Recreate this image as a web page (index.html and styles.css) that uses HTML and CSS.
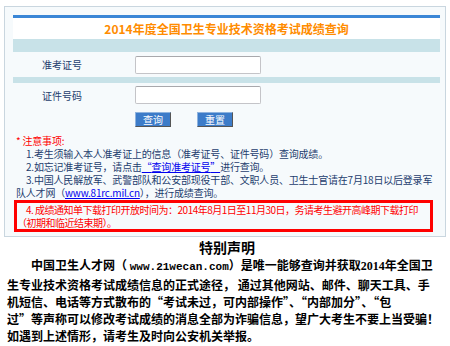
FILE: index.html
```html
<!DOCTYPE html>
<html lang="zh-CN">
<head>
  <meta charset="UTF-8">
  <title>2014年度全国卫生专业技术资格考试成绩查询</title>
  <link rel="stylesheet" href="styles.css">
</head>
<body>

<div class="panel">
  <form class="form" onsubmit="return false">
    <div class="bar"></div>
    <div class="title">2014年度全国卫生专业技术资格考试成绩查询</div>
    <div class="band"></div>
    <div class="row row-first">
      <label class="label">准考证号</label>
      <input class="field" type="text">
    </div>
    <div class="band band-thin"></div>
    <div class="row">
      <label class="label">证件号码</label>
      <input class="field" type="text">
    </div>
    <div class="actions">
      <button class="btn" type="submit">查询</button>
      <button class="btn" type="reset">重置</button>
    </div>
  </form>

  <!-- 注意事项 -->
  <div class="notes">
    <div class="notes-head">* 注意事项:</div>
    <div class="item">1.考生须输入本人准考证上的信息（准考证号、证件号码）查询成绩。</div>
    <div class="item">2.如忘记准考证号，请点击<a href="#"><span class="q">“</span>查询准考证号<span class="q">”</span></a>进行查询。</div>
    <div class="item">3.中国人民解放军、武警部队和公安部现役干部、文职人员、卫生士官请在7月18日以后登录军<br>队人才网（<a class="url" href="#">www.81rc.mil.cn</a>），进行成绩查询。</div>
  </div>

  <div class="alert">4. 成绩通知单下载打印开放时间为：2014年8月1日至11月30日，务请考生避开高峰期下载打印<br>（初期和临近结束期）。</div>
</div>

<h2 class="stmt-title">特别声明</h2>
<p class="stmt">中国卫生人才网（ <span class="latin">www.21wecan.com</span>）是唯一能够查询并获取<span class="num">2014</span>年全国卫<br>生专业技术资格考试成绩信息的正式途径， 通过其他网站、邮件、聊天工具、手<br>机短信、电话等方式散布的<span class="q">“</span>考试未过，可内部操作<span class="q">”</span>、<span class="q">“</span>内部加分<span class="q">”</span>、<span class="q">“</span>包<br>过<span class="q">”</span>等声称可以修改考试成绩的消息全部为诈骗信息，望广大考生不要上当受骗！<br>如遇到上述情形，请考生及时向公安机关举报。</p>

</body>
</html>
```

FILE: styles.css
```css
body {
  font-family: "Noto Sans CJK SC", sans-serif;
  margin: 0;
  padding: 6px 0 0 4px;
  background: #fff;
  color: #000;
}
.panel {
  width: 427px;
  padding: 8px 5px 4px 8px;
  border: 1px solid #c9d6df;
  background-color: #f6fafc;
}
.form {
  margin: 0;
}
.bar {
  height: 3px;
  background-color: #3a86d6;
}
.title {
  height: 21px;
  line-height: 21px;
  background: #fff;
  text-align: center;
  color: #ff8c00;
  font-size: 12px;
  font-weight: bold;
}
.band {
  height: 13px;
  background-color: #c8e2e8;
}
.band-thin {
  height: 6px;
}
.row {
  display: flex;
  align-items: center;
  height: 24px;
}
.row-first {
  height: 25px;
}
.label {
  width: 93px;
  padding-left: 29px;
  font-size: 10px;
  color: #1d3d6e;
}
.field {
  box-sizing: border-box;
  width: 126px;
  height: 18px;
  margin: 0;
  padding: 0 3px;
  border: 1px solid #c4c4c8;
  border-top-color: #a8a8ac;
  border-radius: 2px;
  background: #fff;
}
.actions {
  display: flex;
  gap: 26px;
  padding: 5px 0 0 122px;
}
.btn {
  box-sizing: border-box;
  width: 36px;
  height: 15px;
  padding: 0;
  border: 1px solid;
  border-color: #8fb3de #555 #555 #8fb3de;
  background-color: #3d7cc9;
  color: #fff;
  font-family: "Noto Sans CJK SC", sans-serif;
  font-size: 10px;
  line-height: 13px;
  cursor: pointer;
}

/* 全角引号 */
.q {
  font-feature-settings: "fwid";
}

/* 注意事项 */
.notes {
  margin: 7px 0 0 3px;
  font-size: 10px;
  line-height: 13px;
  letter-spacing: -0.2px;
  color: #1d3d6e;
  white-space: nowrap;
}
.notes-head {
  color: #f00;
}
.item {
  text-indent: 10px;
}
.notes a {
  color: #0000ee;
}
.alert {
  width: 413px;
  margin: 1px 0 0 1px;
  border: 3px solid #f00;
  font-size: 10px;
  line-height: 13px;
  letter-spacing: -0.5px;
  color: #f00;
  text-indent: 9px;
  white-space: nowrap;
}

/* 特别声明 */
.stmt-title {
  margin: 1px 0 0;
  font-size: 14px;
  line-height: 18px;
  text-align: center;
}
.stmt {
  margin: 0 7px 0 3px;
  font-size: 12px;
  font-weight: bold;
  line-height: 17px;
  text-indent: 2em;
  white-space: nowrap;
}
.latin {
  font-family: "Liberation Mono", monospace;
  font-size: 11px;
}
.num {
  font-family: "Liberation Serif", serif;
}
```
